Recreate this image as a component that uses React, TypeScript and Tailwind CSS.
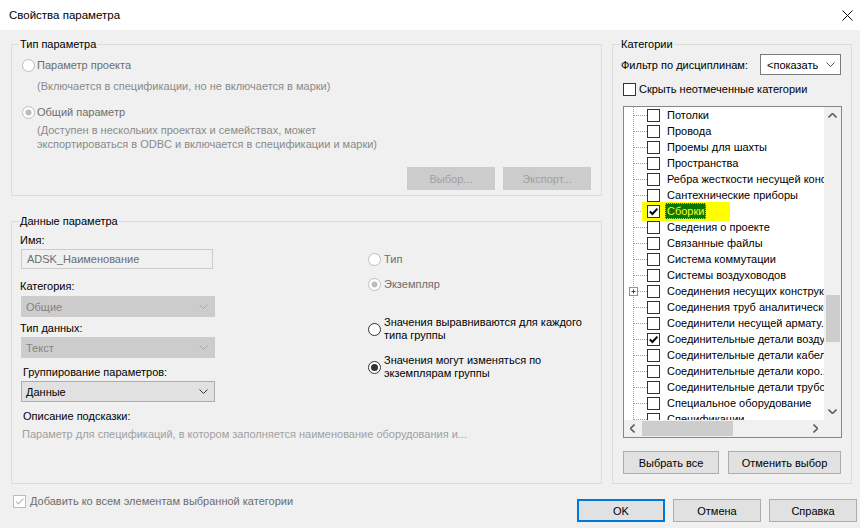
import React from 'react';

type Row = { t: string; checked?: boolean; selected?: boolean; plus?: boolean };

const rows: Row[] = [
  { t: 'Потолки' },
  { t: 'Провода' },
  { t: 'Проемы для шахты' },
  { t: 'Пространства' },
  { t: 'Ребра жесткости несущей конструкции' },
  { t: 'Сантехнические приборы' },
  { t: 'Сборки', checked: true, selected: true },
  { t: 'Сведения о проекте' },
  { t: 'Связанные файлы' },
  { t: 'Система коммутации' },
  { t: 'Системы воздуховодов' },
  { t: 'Соединения несущих конструкций', plus: true },
  { t: 'Соединения труб аналитической модели' },
  { t: 'Соединители несущей армату...' },
  { t: 'Соединительные детали воздуховодов', checked: true },
  { t: 'Соединительные детали кабельных лотков' },
  { t: 'Соединительные детали коро...' },
  { t: 'Соединительные детали трубопроводов' },
  { t: 'Специальное оборудование' },
  { t: 'Спецификации' },
];

function Chevron({ dir = 'down', color = '#333', bold = false }: { dir?: 'down' | 'up' | 'left' | 'right'; color?: string; bold?: boolean }) {
  const d = {
    down: 'M0.5 0.5l4 4 4-4',
    up: 'M0.5 4.5l4-4 4 4',
    left: 'M4.5 0.5l-4 4 4 4',
    right: 'M0.5 0.5l4 4-4 4',
  }[dir];
  const vertical = dir === 'up' || dir === 'down';
  return (
    <svg width={vertical ? 9 : 5} height={vertical ? 5 : 9} viewBox={vertical ? '0 0 9 5' : '0 0 5 9'} fill="none">
      <path d={d} stroke={color} strokeWidth={bold ? 1.6 : 1} />
    </svg>
  );
}

function Radio({ checked, disabled }: { checked?: boolean; disabled?: boolean }) {
  const c = disabled ? '#bcbcbc' : '#333333';
  return (
    <svg width="13" height="13" viewBox="0 0 13 13" className="shrink-0">
      <circle cx="6.5" cy="6.5" r="6" fill="#fff" stroke={c} />
      {checked && <circle cx="6.5" cy="6.5" r={disabled ? 3 : 3.5} fill={c} />}
    </svg>
  );
}

function Check({ checked, disabled }: { checked?: boolean; disabled?: boolean }) {
  const c = disabled ? '#bcbcbc' : '#333333';
  return (
    <svg width="13" height="13" viewBox="0 0 13 13" className="shrink-0">
      <rect x="0.5" y="0.5" width="12" height="12" fill="#fff" stroke={c} />
      {checked && <path d="M2.8 6.4l2.6 2.6 5-5.4" fill="none" stroke={disabled ? '#bcbcbc' : '#000'} strokeWidth={disabled ? 1.2 : 2} />}
    </svg>
  );
}

function Legend({ children }: { children: React.ReactNode }) {
  return <span className="block w-fit -mt-[9px] ml-[7px] px-[1px] bg-[#f0f0f0]">{children}</span>;
}

function Btn({ children, className = '', disabled, primary }: { children: React.ReactNode; className?: string; disabled?: boolean; primary?: boolean }) {
  const look = disabled
    ? 'bg-[#cccccc] border border-[#cccccc] text-[#a0a0a0]'
    : primary
      ? 'bg-[#e1e1e1] border-2 border-[#0078d7]'
      : 'bg-[#e1e1e1] border border-[#adadad]';
  return <div className={`h-[23px] flex items-center justify-center shrink-0 ${look} ${className}`}>{children}</div>;
}

function Select({ value, disabled }: { value: string; disabled?: boolean }) {
  return (
    <div
      className={`h-[21px] w-[194px] flex items-center justify-between pl-[4px] pr-[6px] border ${
        disabled ? 'bg-[#cccccc] border-[#cccccc] text-[#838383]' : 'bg-[#e1e1e1] border-[#adadad]'
      }`}
    >
      <span>{value}</span>
      <Chevron color={disabled ? '#a8a8a8' : '#333'} />
    </div>
  );
}

function TreeLine({ plus }: { plus?: boolean }) {
  return (
    <svg width="23" height="16" viewBox="0 0 23 16" className="shrink-0">
      <path d="M9.5 0v16" stroke="#a0a0a0" strokeDasharray="1 1" />
      <path d={plus ? 'M14 8.5h9' : 'M10 8.5h13'} stroke="#a0a0a0" strokeDasharray="1 1" />
      {plus && (
        <>
          <rect x="5.5" y="4.5" width="8" height="8" fill="#fff" stroke="#919191" />
          <path d="M7.5 8.5h4M9.5 6.5v4" stroke="#2a3a7a" />
        </>
      )}
    </svg>
  );
}

function TreeRow({ row }: { row: Row }) {
  return (
    <div className="h-[16px] flex items-center whitespace-nowrap">
      <TreeLine plus={row.plus} />
      {row.selected ? (
        <div className="h-[19px] -ml-[5px] pl-[5px] pr-[24px] bg-[#ffff00] flex items-center">
          <Check checked />
          <span className="ml-[5px] px-[1px] h-[16px] flex items-center bg-[#0a7800] text-[#f2ff2a] border border-dotted border-[#c8e000]">
            {row.t}
          </span>
        </div>
      ) : (
        <>
          <Check checked={row.checked} />
          <span className="ml-[7px]">{row.t}</span>
        </>
      )}
    </div>
  );
}

export default function App() {
  return (
    <div className="w-[860px] h-[528px] bg-[#f0f0f0] flex flex-col overflow-hidden font-['Liberation_Sans',Arial,sans-serif] text-[11px] leading-[16px] text-black">
      {/* title bar */}
      <div className="h-[30px] shrink-0 bg-white flex items-center justify-between pl-[9px] pr-[7px]">
        <span className="text-[11.5px]">Свойства параметра</span>
        <svg width="11" height="11" viewBox="0 0 11 11">
          <path d="M0.5 0.5l10 10M10.5 0.5l-10 10" stroke="#111" strokeWidth="1" />
        </svg>
      </div>

      <div className="flex pt-[14px]">
        {/* left column */}
        <div className="ml-[11px] w-[591px] flex flex-col">
          <div className="h-[152px] border border-[#dcdcdc] flex flex-col">
            <Legend>Тип параметра</Legend>
            <div className="mt-[5px] ml-[10px] h-[16px] flex items-center gap-[2px] text-[#6d6d6d]">
              <Radio disabled />
              <span>Параметр проекта</span>
            </div>
            <div className="mt-[5px] ml-[25px] text-[#8a8a8a]">(Включается в спецификации, но не включается в марки)</div>
            <div className="mt-[10px] ml-[10px] h-[16px] flex items-center gap-[2px] text-[#6d6d6d]">
              <Radio disabled checked />
              <span>Общий параметр</span>
            </div>
            <div className="mt-[3px] ml-[25px] leading-[14px] text-[#8a8a8a]">
              (Доступен в нескольких проектах и семействах, может
              <br />
              экспортироваться в ODBC и включается в спецификации и марки)
            </div>
            <div className="mt-[16px] pr-[10px] flex justify-end gap-[8px]">
              <Btn disabled className="w-[88px]">Выбор...</Btn>
              <Btn disabled className="w-[88px]">Экспорт...</Btn>
            </div>
          </div>

          <div className="mt-[25px] h-[263px] border border-[#dcdcdc] flex flex-col">
            <Legend>Данные параметра</Legend>
            <div className="flex">
              <div className="ml-[8px] w-[348px] flex flex-col">
                <div className="mt-[3px]">Имя:</div>
                <div className="mt-[1px] ml-[1px] h-[20px] w-[192px] border border-[#cccccc] flex items-center pl-[5px] text-[#6d6d6d]">
                  ADSK_Наименование
                </div>
                <div className="mt-[9px]">Категория:</div>
                <div className="mt-[2px] ml-[1px]">
                  <Select value="Общие" disabled />
                </div>
                <div className="mt-[3px]">Тип данных:</div>
                <div className="mt-[1px] ml-[1px]">
                  <Select value="Текст" disabled />
                </div>
                <div className="mt-[6px] ml-[3px]">Группирование параметров:</div>
                <div className="mt-[1px] ml-[1px]">
                  <Select value="Данные" />
                </div>
              </div>
              <div className="flex flex-col">
                <div className="mt-[22px] h-[16px] flex items-center gap-[3px] text-[#6d6d6d]">
                  <Radio disabled />
                  <span>Тип</span>
                </div>
                <div className="mt-[9px] h-[16px] flex items-center gap-[3px] text-[#6d6d6d]">
                  <Radio disabled checked />
                  <span>Экземпляр</span>
                </div>
                <div className="mt-[24px] flex items-center gap-[3px] leading-[13px]">
                  <Radio />
                  <span>
                    Значения выравниваются для каждого
                    <br />
                    типа группы
                  </span>
                </div>
                <div className="mt-[12px] flex items-center gap-[3px] leading-[13px]">
                  <Radio checked />
                  <span>
                    Значения могут изменяться по
                    <br />
                    экземплярам группы
                  </span>
                </div>
              </div>
            </div>
            <div className="mt-[6px] ml-[11px]">Описание подсказки:</div>
            <div className="mt-[2px] ml-[10px] text-[#a0a0a0] whitespace-nowrap">
              Параметр для спецификаций, в котором заполняется наименование оборудования и...
            </div>
          </div>
        </div>

        {/* right column */}
        <div className="ml-[10px] w-[240px] h-[440px] border border-[#dcdcdc] flex flex-col">
          <Legend>Категории</Legend>
          <div className="mt-[2px] h-[21px] flex items-center justify-between pl-[8px] pr-[10px]">
            <span>Фильтр по дисциплинам:</span>
            <div className="h-[21px] w-[81px] bg-white border border-[#7a7a7a] flex items-center justify-between pl-[6px] pr-[5px] overflow-hidden">
              <span className="whitespace-nowrap">&lt;показать</span>
              <Chevron color="#555" />
            </div>
          </div>
          <div className="mt-[6px] ml-[10px] h-[16px] flex items-center gap-[3px]">
            <Check />
            <span>Скрыть неотмеченные категории</span>
          </div>

          <div className="mt-[9px] ml-[10px] w-[219px] h-[332px] border border-[#828790] bg-white flex flex-col">
            <div className="flex h-[313px]">
              <div className="w-[200px] overflow-hidden flex flex-col">
                {rows.map((r) => (
                  <TreeRow key={r.t} row={r} />
                ))}
              </div>
              <div className="w-[17px] bg-[#f0f0f0] flex flex-col">
                <div className="h-[17px] flex items-center justify-center">
                  <Chevron dir="up" color="#606060" bold />
                </div>
                <div className="flex-1">
                  <div className="mt-[171px] ml-[2px] w-[14px] h-[47px] bg-[#cdcdcd]" />
                </div>
                <div className="h-[17px] flex items-center justify-center">
                  <Chevron dir="down" color="#606060" bold />
                </div>
              </div>
            </div>
            <div className="flex h-[17px]">
              <div className="w-[200px] bg-[#f0f0f0] flex items-center">
                <div className="w-[17px] flex justify-center">
                  <Chevron dir="left" color="#606060" bold />
                </div>
                <div className="flex-1 h-full flex items-center">
                  <div className="ml-[1px] w-[91px] h-[15px] bg-[#cdcdcd]" />
                </div>
                <div className="w-[17px] flex justify-center">
                  <Chevron dir="right" color="#606060" bold />
                </div>
              </div>
              <div className="w-[17px] bg-[#f0f0f0]" />
            </div>
          </div>

          <div className="mt-[13px] ml-[10px] flex gap-[9px]">
            <Btn className="w-[96px]">Выбрать все</Btn>
            <Btn className="w-[113px]">Отменить выбор</Btn>
          </div>
        </div>
      </div>

      {/* bottom row */}
      <div className="flex justify-between pl-[13px] pr-[3px]">
        <div className="mt-[9px] h-[16px] flex items-center gap-[4px] text-[#6d6d6d]">
          <Check checked disabled />
          <span>Добавить ко всем элементам выбранной категории</span>
        </div>
        <div className="mt-[15px] flex gap-[8px]">
          <Btn primary className="w-[88px]">OK</Btn>
          <Btn className="w-[88px]">Отмена</Btn>
          <Btn className="w-[88px]">Справка</Btn>
        </div>
      </div>
    </div>
  );
}
